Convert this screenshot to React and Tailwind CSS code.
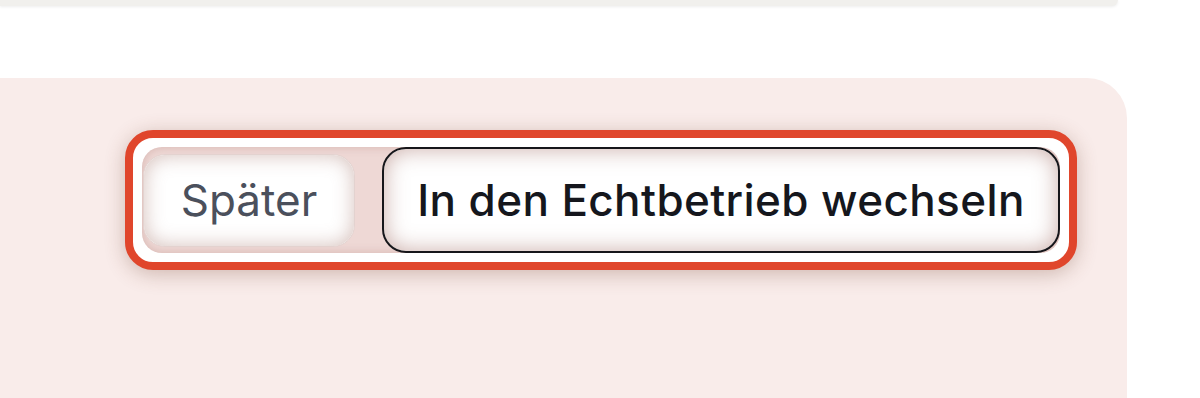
export default function App() {
  return (
    <div className="w-[1200px] h-[398px] bg-white overflow-hidden flex flex-col" style={{ fontFamily: 'Inter, "Noto Sans", sans-serif' }}>
      <div className="h-[6px] w-[1118px] bg-[#f1f0ed] rounded-br-[14px] shadow-[0_1px_3px_rgba(0,0,0,0.07)] shrink-0" />
      <div className="h-[72px] shrink-0" />
      <div className="w-[1127px] flex-1 bg-[#f9ecea] rounded-tr-[40px] pt-[52px] pr-[50px] flex justify-end items-start">
        <div className="rounded-[28px] border-[8px] border-[#e0462c] bg-white p-[9px] shadow-[0_4px_20px_rgba(110,60,40,0.3)]">
          <div className="flex items-center gap-[27px] h-[106px] w-[918px] rounded-[20px] bg-[#eed8d5] shadow-[inset_0_0_10px_rgba(160,100,90,0.3)]">
            <button className="ml-[1px] h-[93px] w-[212px] rounded-[22px] border border-[#e3d2cf] bg-white shadow-[inset_0_0_20px_rgba(160,110,100,0.45)] text-[44px] text-[#4b505c] font-normal leading-none">
              Später
            </button>
            <button className="h-[106px] flex-1 rounded-[24px] border-2 border-[#16161a] bg-white shadow-[inset_0_0_22px_rgba(150,90,80,0.5)] text-[44px] text-[#15171d] font-medium tracking-[0.4px] leading-none">
              In den Echtbetrieb wechseln
            </button>
          </div>
        </div>
      </div>
    </div>
  );
}
